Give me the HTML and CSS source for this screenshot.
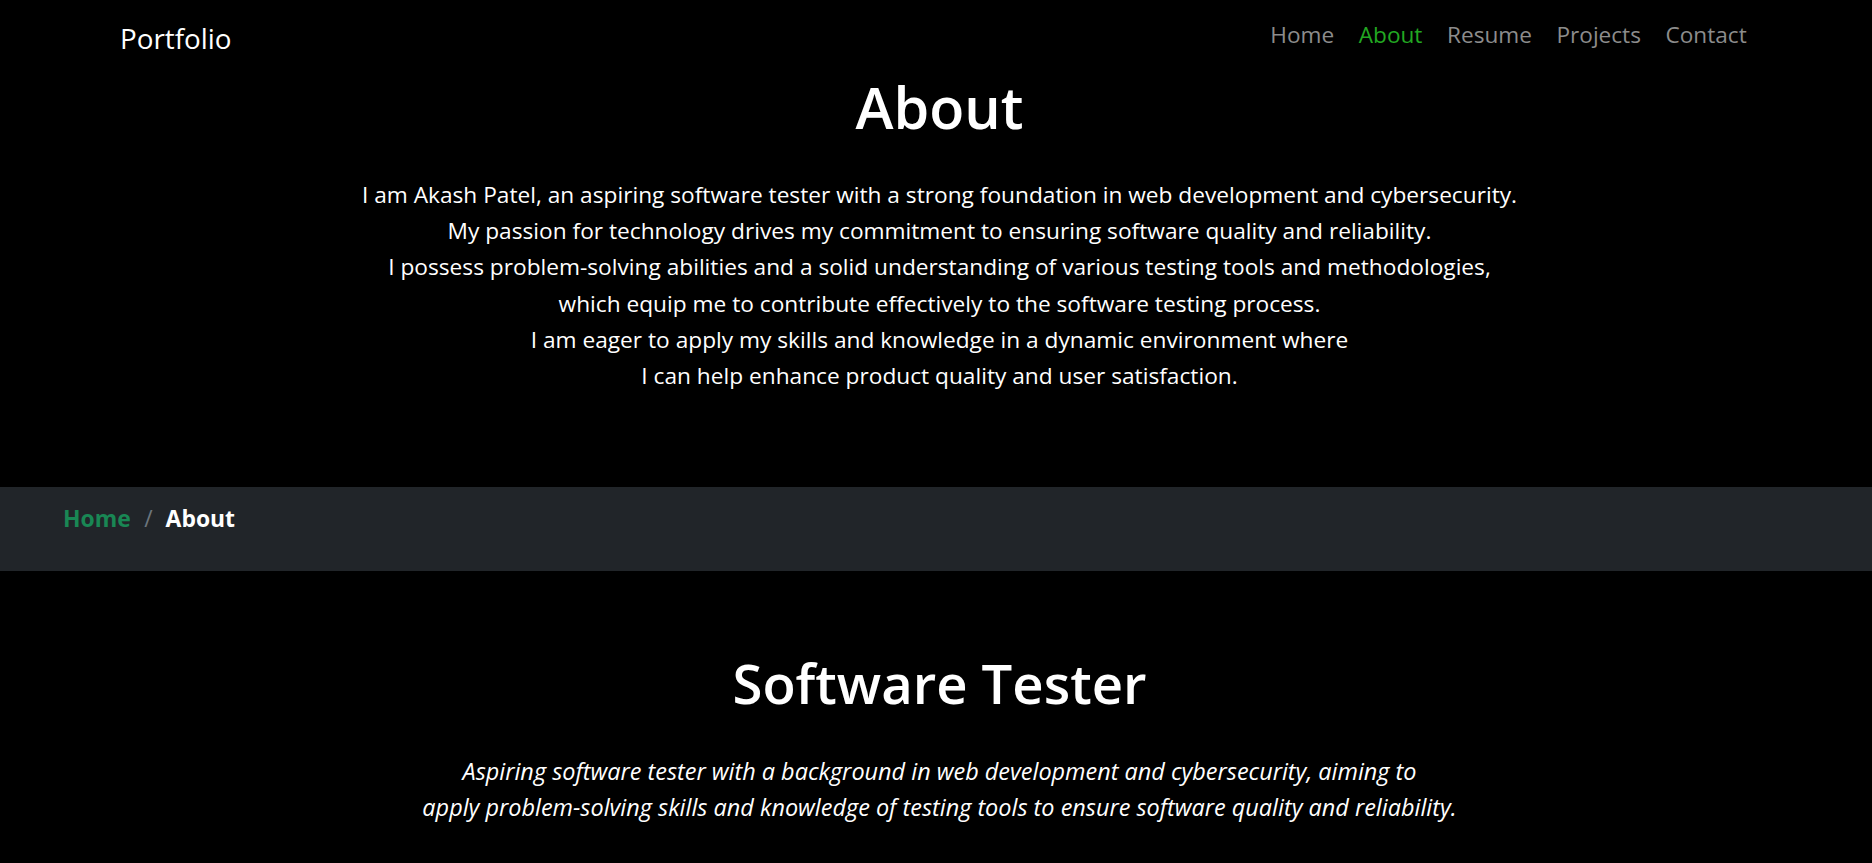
FILE: index.html
```html
<!DOCTYPE html>
<html lang="en">
<head>
<meta charset="utf-8">
<title>About - Portfolio</title>
<link rel="stylesheet" href="styles.css">
</head>
<body>
<header class="navbar">
  <a class="brand" href="#">Portfolio</a>
  <nav>
    <ul class="nav-links">
      <li><a class="nav-link" href="#">Home</a></li>
      <li><a class="nav-link active" href="#">About</a></li>
      <li><a class="nav-link" href="#">Resume</a></li>
      <li><a class="nav-link" href="#">Projects</a></li>
      <li><a class="nav-link" href="#">Contact</a></li>
    </ul>
  </nav>
</header>

<section class="intro">
  <h1 class="intro-title">About</h1>
  <p class="intro-text">I am Akash Patel, an aspiring software tester with a strong foundation in web development and cybersecurity.<br>
  My passion for technology drives my commitment to ensuring software quality and reliability.<br>
  I possess problem-solving abilities and a solid understanding of various testing tools and methodologies,<br>
  which equip me to contribute effectively to the software testing process.<br>
  I am eager to apply my skills and knowledge in a dynamic environment where<br>
  I can help enhance product quality and user satisfaction.</p>
</section>

<div class="crumb-bar">
  <ol class="breadcrumb">
    <li class="crumb-item"><a href="#">Home</a></li>
    <li class="crumb-item current">About</li>
  </ol>
</div>

<section class="role">
  <h2 class="role-title">Software Tester</h2>
  <p class="role-text">Aspiring software tester with a background in web development and cybersecurity, aiming to<br>
  apply problem-solving skills and knowledge of testing tools to ensure software quality and reliability.</p>
</section>
</body>
</html>
```
FILE: styles.css
```css
* { box-sizing: border-box; }

html, body {
  margin: 0;
  padding: 0;
  background: #000;
  color: #fff;
  font-family: "Open Sans", "Noto Sans", sans-serif;
}

a { text-decoration: none; }

/* ---------- navbar ---------- */
.navbar {
  display: flex;
  justify-content: space-between;
  align-items: flex-start;
  padding: 17.5px 113px 0 120px;
}

.brand {
  color: #fff;
  font-size: 27.8px;
  line-height: 1.5;
  font-weight: 400;
}

.nav-links {
  display: flex;
  list-style: none;
  margin: 0;
  padding: 0;
}

.nav-link {
  display: block;
  padding: 0 12.3px;
  font-size: 22.6px;
  line-height: 1.5;
  color: #8c8c8c;
}

.nav-link.active { color: #22a822; }

/* ---------- intro ---------- */
.intro {
  text-align: center;
  padding: 13.5px 0 93px 7px;
}

.intro-title {
  margin: 0 0 35px;
  font-size: 57.44px;
  line-height: 1.2;
  font-weight: 600;
}

.intro-text {
  margin: 0;
  font-size: 22.7px;
  line-height: 36.3px;
}

/* ---------- breadcrumb ---------- */
.crumb-bar {
  background: #212529;
  padding: 14.5px 63px 35.2px;
}

.breadcrumb {
  display: flex;
  list-style: none;
  margin: 0;
  padding: 0;
  font-size: 22.9px;
  line-height: 1.5;
  font-weight: 700;
}

.crumb-item a { color: #198754; }

.crumb-item.current { color: #fff; }

.crumb-item + .crumb-item::before {
  content: "/";
  color: #6c757d;
  font-weight: 400;
  padding: 0 13px 0 13.5px;
}

/* ---------- role ---------- */
.role {
  text-align: center;
  padding: 79.7px 0 0 7px;
}

.role-title {
  margin: 0 0 37.6px;
  font-size: 54.4px;
  line-height: 1.2;
  font-weight: 600;
}

.role-text {
  margin: 0;
  font-size: 23.45px;
  line-height: 35.8px;
  font-style: italic;
}
```
